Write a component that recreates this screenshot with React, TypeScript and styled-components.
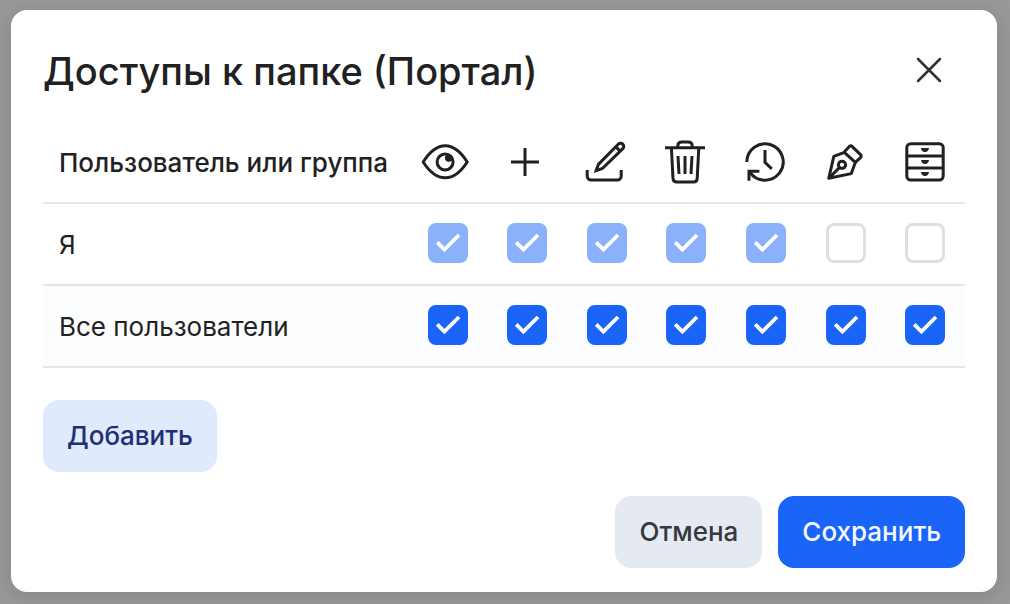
import React, { useState } from "react";
import styled, { createGlobalStyle } from "styled-components";

const GlobalStyle = createGlobalStyle`
  *, *::before, *::after { box-sizing: border-box; }
  body {
    margin: 0;
    background: #999999;
    color: #1f2122;
    font-family: Inter, "Liberation Sans", sans-serif;
    font-size: 26px;
    line-height: 32px;
  }
`;

const Backdrop = styled.div`
  min-height: 100vh;
  padding: 10px 13px 12px 11px;
`;

const Dialog = styled.section`
  padding: 36px 32px 24px;
  border-radius: 16px;
  background: #ffffff;
  box-shadow: 0 4px 24px rgba(0, 0, 0, 0.14);
`;

const Header = styled.header`
  display: flex;
  align-items: center;
  justify-content: space-between;
  padding-right: 12px;
  margin-bottom: 28px;
`;

const Title = styled.h1`
  margin: 0;
  padding-top: 2px;
  font-size: 38px;
  line-height: 46px;
  font-weight: 500;
`;

const CloseButton = styled.button`
  display: grid;
  place-items: center;
  width: 48px;
  height: 48px;
  padding: 0;
  border: 0;
  background: none;
  color: #2b3236;
  cursor: pointer;
`;

const Icon = styled.svg.attrs({ viewBox: "0 0 48 48", "aria-hidden": true })`
  display: block;
  width: 48px;
  height: 48px;
  fill: none;
  stroke: currentColor;
  stroke-width: 3;
`;

const AccessTable = styled.table`
  display: block;
  width: 100%;
  margin-bottom: 32px;
`;

const TableHead = styled.thead`
  display: block;
`;

const TableBody = styled.tbody`
  display: block;
`;

const HeadRow = styled.tr`
  display: grid;
  grid-template-columns: 362fr repeat(7, 80fr);
  align-items: center;
  padding: 16px 0;
  border-bottom: 2px solid #e5e5e5;
`;

const BodyRow = styled.tr<{ $striped: boolean }>`
  display: grid;
  grid-template-columns: 729fr repeat(7, 159fr);
  align-items: center;
  padding: 19px 0 21px;
  border-bottom: 2px solid #e5e5e5;
  background: ${(p) => (p.$striped ? "#fcfdff" : "#ffffff")};
`;

const NameHeading = styled.th`
  padding: 2px 0 0 16px;
  font-weight: 500;
  text-align: left;
  white-space: nowrap;
`;

const NameCell = styled.th`
  padding: 4px 0 0 16px;
  font-weight: 400;
  text-align: left;
`;

const RightHeading = styled.th`
  display: grid;
  justify-items: center;
  padding: 0;
`;

const RightCell = styled.td`
  display: grid;
  justify-items: center;
  padding: 0;
`;

const CheckLabel = styled.label`
  display: grid;
  width: 40px;
  height: 40px;
`;

const CheckInput = styled.input`
  grid-area: 1 / 1;
  appearance: none;
  width: 40px;
  height: 40px;
  margin: 0;
  border: 3px solid #bfc1c2;
  border-radius: 8px;
  background: #ffffff;

  &:checked {
    border-color: #1a65f8;
    background: #1a65f8;
  }
  &:disabled {
    opacity: 0.5;
  }
`;

const CheckMark = styled.svg.attrs({ viewBox: "0 0 40 40", "aria-hidden": true })`
  grid-area: 1 / 1;
  z-index: 1;
  width: 40px;
  height: 40px;
  fill: none;
  stroke: #ffffff;
  stroke-width: 3.8;
  pointer-events: none;
`;

const Button = styled.button<{ $tone: "soft" | "neutral" | "primary" }>`
  height: 72px;
  padding: 0 24px;
  border: 0;
  border-radius: 16px;
  font: inherit;
  font-weight: 500;
  cursor: pointer;
  color: ${(p) => ({ soft: "#202f75", neutral: "#33393d", primary: "#f5f8ff" })[p.$tone]};
  background: ${(p) => ({ soft: "#dfeafd", neutral: "#e5eaf2", primary: "#1a65f8" })[p.$tone]};
`;

const Footer = styled.footer`
  display: flex;
  justify-content: flex-end;
  gap: 16px;
  margin-top: 24px;
`;

const rights: { label: string; icon: React.ReactNode }[] = [
  {
    label: "Просмотр",
    icon: (
      <>
        <path d="M2.2 24C9 13.2 15.8 7.8 24.2 7.8S39.4 13.2 46.2 24C39.4 34.6 32.6 39.8 24.2 39.8S9 34.6 2.2 24Z" strokeLinejoin="round" />
        <circle cx="24.1" cy="24" r="8" />
        <circle cx="27.8" cy="20" r="3.8" fill="currentColor" stroke="none" />
      </>
    ),
  },
  { label: "Создание", icon: <path d="M24 10v28M10 24h28" /> },
  {
    label: "Редактирование",
    icon: (
      <>
        <path d="M6.2 32v6a4 4 0 0 0 4 4h26a4 4 0 0 0 4-4v-6" />
        <path d="M15.2 32.6 17.4 26.4 37.2 6.2a3.2 3.2 0 0 1 4.6 4.5L21.4 30.5Z" />
        <path d="m34.6 8.6 4.8 4.8" />
      </>
    ),
  },
  {
    label: "Удаление",
    icon: (
      <>
        <path d="M4 9.8h40M16.8 9.8V8q0-4 4-4h6.4q4 0 4 4v1.8" />
        <path d="m10.4 10 1.6 30.4q.2 3.6 3.8 3.6h16.6q3.6 0 3.8-3.6L37.8 10M17 18l1 18M24 18v18M31 18l-1 18" />
      </>
    ),
  },
  {
    label: "История",
    icon: (
      <>
        <path d="M5.8 24A18.2 18.2 0 1 1 9 34.3" />
        <path d="M18.4 33.3H8v9.5M24 12v12.4l6.8 6.4" />
      </>
    ),
  },
  {
    label: "Подписание",
    icon: (
      <>
        <path d="M7.8 40.2 12.8 18.4 23.3 14.4 34.3 24.4 30.3 35.6Z" strokeLinejoin="round" />
        <path d="m23.3 14 5-5.4q1.5-1.6 3 0l8.2 8q1.5 1.5 0 3l-5.2 4.8M7.8 40.2l10.6-10.6" />
        <circle cx="21" cy="26.8" r="3.6" />
      </>
    ),
  },
  {
    label: "Архив",
    icon: (
      <>
        <rect x="5.8" y="5.7" width="36.4" height="36.4" rx="4" />
        <path d="M6 18h36M6 30h36" />
        <path
          d="M20 10h8q-.6 4-4 4t-4-4ZM20 22h8q-.6 4-4 4t-4-4ZM20 34h8q-.6 4-4 4t-4-4Z"
          fill="currentColor"
          stroke="none"
        />
      </>
    ),
  },
];

const members = [
  { name: "Я", locked: true, granted: [true, true, true, true, true, false, false] },
  { name: "Все пользователи", locked: false, granted: [true, true, true, true, true, true, true] },
];

export default function App() {
  const [rows, setRows] = useState(members);

  const toggle = (row: number, column: number) =>
    setRows((current) =>
      current.map((member, r) =>
        r === row
          ? { ...member, granted: member.granted.map((value, c) => (c === column ? !value : value)) }
          : member
      )
    );

  return (
    <>
      <GlobalStyle />
      <Backdrop>
        <Dialog role="dialog" aria-labelledby="access-title">
          <Header>
            <Title id="access-title">Доступы к папке (Портал)</Title>
            <CloseButton type="button" aria-label="Закрыть">
              <Icon>
                <path d="m13 13 22 22M35 13 13 35" strokeWidth="2.5" strokeLinecap="round" />
              </Icon>
            </CloseButton>
          </Header>

          <AccessTable>
            <TableHead>
              <HeadRow>
                <NameHeading scope="col">Пользователь или группа</NameHeading>
                {rights.map((right) => (
                  <RightHeading key={right.label} scope="col" aria-label={right.label}>
                    <Icon>{right.icon}</Icon>
                  </RightHeading>
                ))}
              </HeadRow>
            </TableHead>
            <TableBody>
              {rows.map((member, r) => (
                <BodyRow key={member.name} $striped={r % 2 === 1}>
                  <NameCell scope="row">{member.name}</NameCell>
                  {member.granted.map((checked, c) => (
                    <RightCell key={rights[c].label}>
                      <CheckLabel>
                        <CheckInput
                          type="checkbox"
                          aria-label={`${member.name}: ${rights[c].label}`}
                          checked={checked}
                          disabled={member.locked}
                          onChange={() => toggle(r, c)}
                        />
                        {checked && (
                          <CheckMark>
                            <path d="m9.2 19.4 7.2 7.2L31 12" />
                          </CheckMark>
                        )}
                      </CheckLabel>
                    </RightCell>
                  ))}
                </BodyRow>
              ))}
            </TableBody>
          </AccessTable>

          <Button type="button" $tone="soft">Добавить</Button>

          <Footer>
            <Button type="button" $tone="neutral">Отмена</Button>
            <Button type="button" $tone="primary">Сохранить</Button>
          </Footer>
        </Dialog>
      </Backdrop>
    </>
  );
}
